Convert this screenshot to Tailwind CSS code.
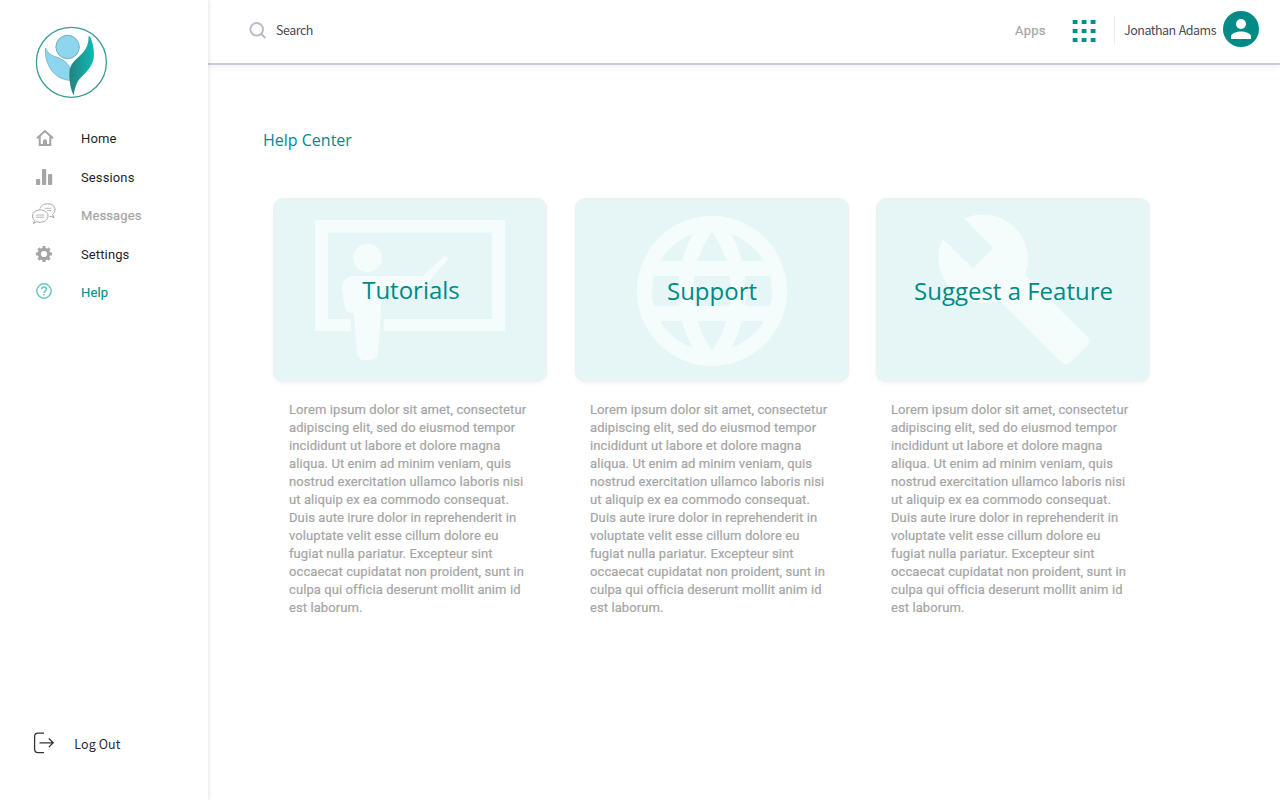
<!DOCTYPE html>
<html lang="en">
<head>
<meta charset="utf-8">
<title>Help Center</title>
<script src="https://cdn.jsdelivr.net/npm/@tailwindcss/browser@4"></script>
</head>
<body class="flex h-[800px] w-[1280px] overflow-hidden bg-white font-['Roboto',sans-serif] text-[13px] leading-[18px]">
<aside class="z-10 flex w-[207.5px] shrink-0 flex-col bg-white shadow-[0_0_5px_rgba(0,0,0,0.14)]">
  <svg class="mt-[26px] ml-[35px] shrink-0" width="73" height="73" viewBox="0 0 73 73">
    <defs><linearGradient id="leaf" x1="0" x2="1"><stop offset="0" stop-color="#25827f"/><stop offset="1" stop-color="#0cbab5"/></linearGradient></defs>
    <circle cx="36.4" cy="36.3" r="35" fill="none" stroke="#3c9a97" stroke-width="1.3"/>
    <circle cx="32.6" cy="21" r="11.7" fill="#8ed5ee" stroke="#6cb0bd" stroke-width="1"/>
    <path d="M10.500 22C13 29 19 30 25 32.500C31 35.500 34.500 39 34.800 43V54.500C28 53.500 22 51 17.500 45.500C12 39 9.500 29 10.500 22Z" fill="#8ed5ee" stroke="#6cb0bd" stroke-width=".8"/>
    <path d="M53.500 10.500C54.500 10 55.500 11 56 13C59 20 59.500 29 58.500 33C56 45 45 50 42 57C40.500 61 39 65 38.600 69.500C36 64 34.600 58 34.500 51C34.300 44 34.800 40 39 35.500C45 29 54 24 53.500 10.500Z" fill="url(#leaf)"/>
  </svg>
  <nav class="mt-[21px] flex flex-col tracking-[0.12px] text-[#1f1f1f]">
    <a class="flex h-[38.5px] items-center"><span class="flex w-[81px] pl-[36px]">
      <svg class="-mt-[2px]" width="18" height="18" viewBox="0 0 18 18" fill="none" stroke="#a5a5a5" stroke-width="2"><path d="M1 9.300L9 2L17 9.300M3.700 7.500V16H14.300V7.500"/><path d="M7 16V11.500L9 10L11 11.500V16Z" fill="#a5a5a5" stroke="none"/></svg></span>Home</a>
    <a class="flex h-[38.5px] items-center"><span class="flex w-[81px] pl-[36px]">
      <svg class="-mt-px" width="17" height="18" viewBox="0 0 17 18" fill="#a5a5a5"><rect y="11" width="4.200" height="6" rx="1"/><rect x="6" y="1" width="4.200" height="16" rx="1"/><rect x="12" y="6" width="4.200" height="11" rx="1"/></svg></span>Sessions</a>
    <a class="flex h-[38.5px] items-center tracking-[0.1px] text-[#a5a5a5] [-webkit-text-stroke:0.2px_#a5a5a5]"><span class="flex w-[81px] pl-[32px]">
      <svg class="-mt-[5px]" width="24" height="22" viewBox="0 0 24 22" fill="none" stroke="#a5a5a5"><path d="M8 5.500C8.500 3 11.500 .8 15.500 .8C20 .8 23 3.200 23 6.500C23 8.800 22 10.300 20.500 11.500L22.200 14.500L17.500 13.200"/><path d="M8.200 6.800C12.500 6.800 16 9.500 16 13C16 16.500 12.500 19.300 8.200 19.300C6.900 19.300 5.800 19 4.800 18.600L1.600 20.500L2.500 17.200C1.300 16 .5 14.600 .5 13C.5 9.500 4 6.800 8.200 6.800Z"/><path d="M4.200 12H12.200M4.200 14.200H12.200M12.500 5.300H19.300M15 7.500H19.300" stroke-width=".8"/></svg></span>Messages</a>
    <a class="flex h-[38.5px] items-center"><span class="flex w-[81px] pl-[36px]">
      <svg class="-mt-px" width="16" height="16" viewBox="0 0 16 16"><g fill="none" stroke="#a5a5a5"><circle cx="8" cy="8" r="4.700" stroke-width="3.200"/><path d="M8 0V3M8 13V16M0 8H3M13 8H16M2.400 2.400L4 4M12 12L13.600 13.600M13.600 2.400L12 4M4 12L2.400 13.600" stroke-width="3"/></g></svg></span>Settings</a>
    <a class="flex h-[38.5px] items-center text-[#008f8a] [-webkit-text-stroke:0.15px_#008f8a]"><span class="flex w-[81px] pl-[36px]">
      <svg class="-mt-[4px]" width="16" height="16" viewBox="0 0 16 16" fill="none" stroke="#62c9c6" stroke-width="1.500"><circle cx="8" cy="8" r="7.200"/><path d="M5.600 6.300C5.600 4.700 6.600 3.900 8 3.900S10.400 4.800 10.400 6.200C10.400 7.800 8 8 8 10"/><path d="M8 11V12.600"/></svg></span>Help</a>
  </nav>
  <a class="mt-auto mb-[46px] flex items-start pl-[33px] font-['Noto_Sans_CJK_SC',sans-serif] text-[12.5px] tracking-[0.1px] text-[#2c2c2c]">
    <svg width="22" height="22" viewBox="0 0 22 22" fill="none" stroke="#333" stroke-width="1.300"><path d="M11 1.200H5Q1.600 1.200 1.600 4.500V17.300Q1.600 20.600 5 20.600H11M6.500 10.800H20M15.800 6.500L20.200 10.800L15.800 15.100"/></svg>
    <span class="mt-[3px] ml-[19.3px]">Log Out</span></a>
</aside>
<div class="flex min-w-0 flex-1 flex-col">
  <header class="flex h-[65px] shrink-0 items-start border-b-2 border-[#c8ccd6] shadow-[0_2px_8px_rgba(0,0,0,0.06)] font-['Noto_Sans_CJK_SC',sans-serif] text-[12.5px] tracking-[-0.5px] text-[#4a4a5a]">
    <svg class="mt-[22px] ml-[41.5px]" width="18" height="18" viewBox="0 0 18 18" fill="none" stroke="#bbb9cc" stroke-width="2"><circle cx="7.700" cy="7.300" r="6.300"/><path d="M12 11.800L16.300 16"/></svg>
    <span class="mt-[21px] ml-[9px]">Search</span>
    <span class="mt-[22px] ml-auto w-[57px] font-['Roboto',sans-serif] text-[13px] tracking-[0.2px] text-[#a5a5a5] [-webkit-text-stroke:0.2px_#a5a5a5]">Apps</span>
    <svg class="mt-[19px]" width="24" height="24" viewBox="0 0 24 24" fill="#008f8a"><path d="M.7 1h4.800v4h-4.800zM9.700 1h4.800v4h-4.800zM18.700 1h4.800v4h-4.800zM.7 10h4.800v4h-4.800zM9.700 10h4.800v4h-4.800zM18.700 10h4.800v4h-4.800zM.7 19h4.800v4h-4.800zM9.700 19h4.800v4h-4.800zM18.700 19h4.800v4h-4.800z"/></svg>
    <span class="mt-4 ml-[18px] h-7 w-px bg-[#ebebf2]"></span>
    <span class="mt-[21px] ml-[9px] w-[99px] whitespace-nowrap [word-spacing:0.7px]">Jonathan Adams</span>
    <svg class="mt-[11px] mr-[21px]" width="36" height="36" viewBox="0 0 36 36"><circle cx="18" cy="18" r="18" fill="#008b87"/><circle cx="18" cy="13" r="5" fill="#fff"/><path d="M8 28V25.500C8 22 14 20.500 18 20.500S28 22 28 25.500V28Z" fill="#fff"/></svg>
  </header>
  <main class="pl-[55.5px]">
    <h1 class="mt-[64px] font-['Open_Sans',sans-serif] text-[16px] leading-[22px] text-[#008a86]">Help Center</h1>
    <div class="mt-[47px] ml-[10px] flex">
      <section class="mr-[28px] w-[274px]">
        <div class="relative flex h-[184px] items-center justify-center rounded-[10px] border border-[#eef1f1] bg-[#e6f6f6] shadow-[0_2px_4px_rgba(0,0,0,0.04)]">
          <svg class="absolute -top-px -left-px" width="274" height="184" viewBox="0 0 274 184" fill="#f5fcfc"><path d="M42 22H232V133H110.500L111 121H219V34.500H55V121H77.500L78 133H42Z"/><circle cx="94.700" cy="60" r="14.200"/><path d="M82 78H149.500L172 57.500L175.500 61L155 84.500Q152 88 148 88H112L108.500 96L107 130L104.500 157Q103 162 97 162H92Q85.500 162 84 157L81 115Q73 116 71.500 108L69 91Q68 79 82 78Z"/></svg>
          <h2 class="relative -mt-0.5 ml-0.5 font-['Open_Sans',sans-serif] text-[24px] leading-[33px] text-[#008a86]">Tutorials</h2>
        </div>
        <p class="mt-[19px] ml-4 w-[245px] tracking-[0.09px] text-[#a5a5a5] [-webkit-text-stroke:0.2px_#a5a5a5]">Lorem ipsum dolor sit amet, consectetur<br>adipiscing elit, sed do eiusmod tempor<br>incididunt ut labore et dolore magna<br>aliqua. Ut enim ad minim veniam, quis<br>nostrud exercitation ullamco laboris nisi<br>ut aliquip ex ea commodo consequat.<br>Duis aute irure dolor in reprehenderit in<br>voluptate velit esse cillum dolore eu<br>fugiat nulla pariatur. Excepteur sint<br>occaecat cupidatat non proident, sunt in<br>culpa qui officia deserunt mollit anim id<br>est laborum.</p>
      </section>
      <section class="mr-[27px] w-[274px]">
        <div class="relative flex h-[184px] items-center justify-center rounded-[10px] border border-[#eef1f1] bg-[#e6f6f6] shadow-[0_2px_4px_rgba(0,0,0,0.04)]">
          <svg class="absolute top-[2px] left-[46px]" width="180" height="180" viewBox="0 0 24 24" fill="#f5fcfc"><path d="M11.990 2C6.470 2 2 6.480 2 12s4.470 10 9.990 10C17.520 22 22 17.520 22 12S17.520 2 11.990 2zm6.930 6h-2.950c-.32-1.250-.78-2.450-1.380-3.560 1.840.63 3.370 1.910 4.330 3.560zM12 4.040c.83 1.200 1.480 2.530 1.910 3.960h-3.820c.43-1.430 1.080-2.760 1.910-3.960zM4.260 14C4.100 13.360 4 12.690 4 12s.1-1.360.26-2h3.380c-.08.66-.14 1.320-.14 2 0 .68.06 1.340.14 2H4.260zm.82 2h2.950c.32 1.250.78 2.450 1.380 3.560-1.840-.63-3.370-1.900-4.330-3.560zm2.950-8H5.080c.96-1.660 2.490-2.930 4.330-3.560C8.810 5.550 8.350 6.750 8.030 8zM12 19.960c-.83-1.200-1.480-2.530-1.910-3.960h3.820c-.43 1.430-1.080 2.760-1.910 3.960zM14.340 14H9.660c-.09-.66-.16-1.320-.16-2 0-.68.07-1.350.16-2h4.680c.09.65.16 1.320.16 2 0 .68-.07 1.340-.16 2zm.25 5.560c.6-1.110 1.060-2.310 1.380-3.560h2.950c-.96 1.650-2.490 2.930-4.330 3.560zM16.360 14c.08-.66.14-1.320.14-2 0-.68-.06-1.340-.14-2h3.380c.16.64.26 1.310.26 2s-.1 1.360-.26 2h-3.380z"/></svg>
          <h2 class="relative font-['Open_Sans',sans-serif] text-[24px] leading-[33px] text-[#008a86]">Support</h2>
        </div>
        <p class="mt-[19px] ml-[15px] w-[245px] tracking-[0.09px] text-[#a5a5a5] [-webkit-text-stroke:0.2px_#a5a5a5]">Lorem ipsum dolor sit amet, consectetur<br>adipiscing elit, sed do eiusmod tempor<br>incididunt ut labore et dolore magna<br>aliqua. Ut enim ad minim veniam, quis<br>nostrud exercitation ullamco laboris nisi<br>ut aliquip ex ea commodo consequat.<br>Duis aute irure dolor in reprehenderit in<br>voluptate velit esse cillum dolore eu<br>fugiat nulla pariatur. Excepteur sint<br>occaecat cupidatat non proident, sunt in<br>culpa qui officia deserunt mollit anim id<br>est laborum.</p>
      </section>
      <section class="w-[274px]">
        <div class="relative flex h-[184px] items-center justify-center rounded-[10px] border border-[#eef1f1] bg-[#e6f6f6] shadow-[0_2px_4px_rgba(0,0,0,0.04)]">
          <svg class="absolute top-[8px] left-[55px]" width="164" height="164" viewBox="0 0 24 24" fill="#f5fcfc"><path d="M22.700 19l-9.100-9.100c.9-2.300.4-5-1.500-6.900-2-2-5-2.400-7.400-1.300L9 6 6 9 1.600 4.700C.4 7.100.9 10.100 2.900 12.100c1.900 1.900 4.600 2.400 6.900 1.500l9.100 9.100c.4.4 1 .4 1.400 0l2.300-2.300c.5-.4.5-1.100.1-1.400z"/></svg>
          <h2 class="relative ml-px font-['Open_Sans',sans-serif] text-[24px] leading-[33px] text-[#008a86]">Suggest a Feature</h2>
        </div>
        <p class="mt-[19px] ml-[15px] w-[245px] tracking-[0.09px] text-[#a5a5a5] [-webkit-text-stroke:0.2px_#a5a5a5]">Lorem ipsum dolor sit amet, consectetur<br>adipiscing elit, sed do eiusmod tempor<br>incididunt ut labore et dolore magna<br>aliqua. Ut enim ad minim veniam, quis<br>nostrud exercitation ullamco laboris nisi<br>ut aliquip ex ea commodo consequat.<br>Duis aute irure dolor in reprehenderit in<br>voluptate velit esse cillum dolore eu<br>fugiat nulla pariatur. Excepteur sint<br>occaecat cupidatat non proident, sunt in<br>culpa qui officia deserunt mollit anim id<br>est laborum.</p>
      </section>
    </div>
  </main>
</div>
</body>
</html>
